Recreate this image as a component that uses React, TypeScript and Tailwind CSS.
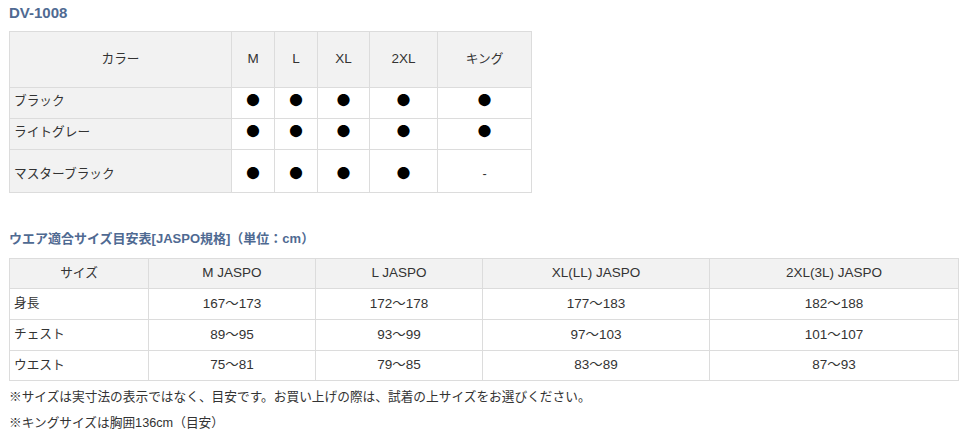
import React from "react";

const font = { fontFamily: '"Liberation Sans", "Noto Sans CJK JP", sans-serif' };
const dotFont = { fontFamily: '"Noto Sans CJK JP", sans-serif' };

const sizes1 = ["M", "L", "XL", "2XL", "キング"];
const rows1: { name: string; vals: string[]; tall?: boolean }[] = [
  { name: "ブラック", vals: ["●", "●", "●", "●", "●"] },
  { name: "ライトグレー", vals: ["●", "●", "●", "●", "●"] },
  { name: "マスターブラック", vals: ["●", "●", "●", "●", "-"], tall: true },
];

const head2 = ["サイズ", "M JASPO", "L JASPO", "XL(LL) JASPO", "2XL(3L) JASPO"];
const rows2 = [
  ["身長", "167～173", "172～178", "177～183", "182～188"],
  ["チェスト", "89～95", "93～99", "97～103", "101～107"],
  ["ウエスト", "75～81", "79～85", "83～89", "87～93"],
];

export default function App() {
  return (
    <div className="bg-white w-[963px] h-[436px] pl-[9px] pt-[3px] text-[#333] text-[12.7px]" style={font}>
      <div className="h-[20px] leading-[20px] text-[15px] font-bold text-[#4f6a92]">DV-1008</div>
      <table className="mt-[8px] border-collapse table-fixed w-[522px]">
        <colgroup>
          <col className="w-[222px]" />
          <col className="w-[43px]" />
          <col className="w-[43px]" />
          <col className="w-[52px]" />
          <col className="w-[68px]" />
          <col className="w-[94px]" />
        </colgroup>
        <thead>
          <tr className="h-[56px] bg-[#f2f2f2]">
            <th className="border border-[#dcdcdc] font-normal text-center p-0">カラー</th>
            {sizes1.map((s) => (
              <th
                key={s}
                className={
                  "border border-[#dcdcdc] font-normal text-center p-0 " +
                  (s === "キング" ? "" : "text-[13.5px]")
                }
              >
                {s}
              </th>
            ))}
          </tr>
        </thead>
        <tbody>
          {rows1.map((r) => (
            <tr key={r.name} className={r.tall ? "h-[43px]" : "h-[31px]"}>
              <td
                className={
                  "border border-[#dcdcdc] bg-[#f2f2f2] text-left pl-[4px] " +
                  (r.tall ? "pt-[7px]" : "pb-[3px]")
                }
              >
                {r.name}
              </td>
              {r.vals.map((v, i) => (
                <td
                  key={i}
                  className={
                    "border border-[#dcdcdc] text-center p-0 " + (r.tall ? "pt-[7px]" : "pb-[3px]")
                  }
                >
                  {v === "●" ? (
                    <span className="text-[13.5px] text-black leading-none" style={dotFont}>
                      ●
                    </span>
                  ) : (
                    <span>{v}</span>
                  )}
                </td>
              ))}
            </tr>
          ))}
        </tbody>
      </table>

      <div className="mt-[36px] h-[20px] leading-[20px] text-[13px] font-bold text-[#4f6a92]">
        ウエア適合サイズ目安表[JASPO規格]（単位：cm）
      </div>
      <table className="mt-[9px] border-collapse table-fixed w-[949px]">
        <colgroup>
          <col className="w-[139px]" />
          <col className="w-[167px]" />
          <col className="w-[167px]" />
          <col className="w-[227px]" />
          <col className="w-[249px]" />
        </colgroup>
        <thead>
          <tr className="h-[30px] bg-[#f2f2f2]">
            {head2.map((h, i) => (
              <th
                key={h}
                className={
                  "border border-[#dcdcdc] font-normal text-center p-0 " + (i === 0 ? "" : "text-[13.5px]")
                }
              >
                {h}
              </th>
            ))}
          </tr>
        </thead>
        <tbody>
          {rows2.map((r, ri) => (
            <tr key={r[0]} className={ri === 2 ? "h-[30px]" : "h-[31px]"}>
              {r.map((c, i) => (
                <td
                  key={i}
                  className={
                    "border border-[#dcdcdc] p-0 " +
                    (i === 0 ? "text-left pl-[4px]" : "text-center text-[13.5px]")
                  }
                >
                  {c}
                </td>
              ))}
            </tr>
          ))}
        </tbody>
      </table>
      <div className="mt-[6px] leading-[20px]">
        ※サイズは実寸法の表示ではなく、目安です。お買い上げの際は、試着の上サイズをお選びください。
      </div>
      <div className="mt-[6px] leading-[20px]">※キングサイズは胸囲136cm（目安）</div>
    </div>
  );
}
